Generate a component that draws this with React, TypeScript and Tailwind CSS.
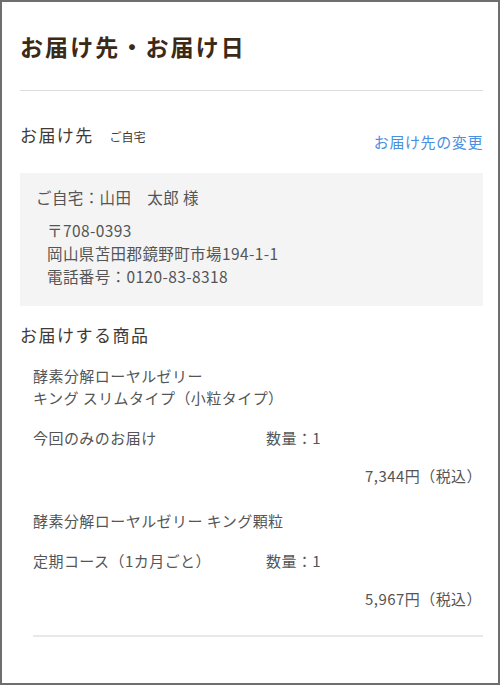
import React from "react";

const font = {
  fontFamily: '"Noto Sans CJK JP", "Noto Sans", sans-serif',
};

function Product({
  name,
  plan,
  price,
}: {
  name: React.ReactNode;
  plan: string;
  price: string;
}) {
  return (
    <div className="pl-[13px] text-[15px] leading-[22px] tracking-[0.45px] text-[#555]">
      <div>{name}</div>
      <div className="mt-[18px] flex">
        <span className="w-[233px]">{plan}</span>
        <span>数量：1</span>
      </div>
      <div className="mt-[16px] pr-[1px] text-right">{price}</div>
    </div>
  );
}

export default function App() {
  return (
    <div
      style={font}
      className="h-[685px] w-[500px] border-2 border-[#6e6e6e] bg-white"
    >
      <div className="pl-[18px] pr-[15px] pt-[28px]">
        <h1 className="text-[23px] font-bold leading-[33px] tracking-[2.1px] text-[#3b2a17]">
          お届け先・お届け日
        </h1>
        <div className="mt-[27px] h-px bg-[#dcdcdc]" />

        <div className="mt-[30px] flex items-start justify-between">
          <div className="flex items-baseline text-[#3f3a35]">
            <span className="text-[17px] leading-[27px] tracking-[1.4px]">
              お届け先
            </span>
            <span className="ml-[16px] text-[12px]">ご自宅</span>
          </div>
          <a className="mt-[9px] text-[15px] leading-[23px] tracking-[0.6px] text-[#4a8fe0]">
            お届け先の変更
          </a>
        </div>

        <div className="mt-[20px] bg-[#f4f4f4] pb-[18px] pl-[16px] pt-[11px] text-[15.5px] tracking-[0.4px] text-[#555]">
          <div className="leading-[26px]">ご自宅：山田　太郎 様</div>
          <div className="mt-[9px] pl-[11px] leading-[23px]">
            <div>〒708-0393</div>
            <div>岡山県苫田郡鏡野町市場194-1-1</div>
            <div>電話番号：0120-83-8318</div>
          </div>
        </div>

        <div className="mt-[15px] text-[17px] leading-[27px] tracking-[1.5px] text-[#3f3a35]">
          お届けする商品
        </div>

        <div className="mt-[17px]">
          <Product
            name={
              <>
                酵素分解ローヤルゼリー
                <br />
                キング スリムタイプ（小粒タイプ）
              </>
            }
            plan="今回のみのお届け"
            price="7,344円（税込）"
          />
        </div>
        <div className="mt-[23px]">
          <Product
            name="酵素分解ローヤルゼリー キング顆粒"
            plan="定期コース（1カ月ごと）"
            price="5,967円（税込）"
          />
        </div>
        <div className="ml-[13px] mt-[25px] h-[2px] bg-[#e8e8e8]" />
      </div>
    </div>
  );
}
